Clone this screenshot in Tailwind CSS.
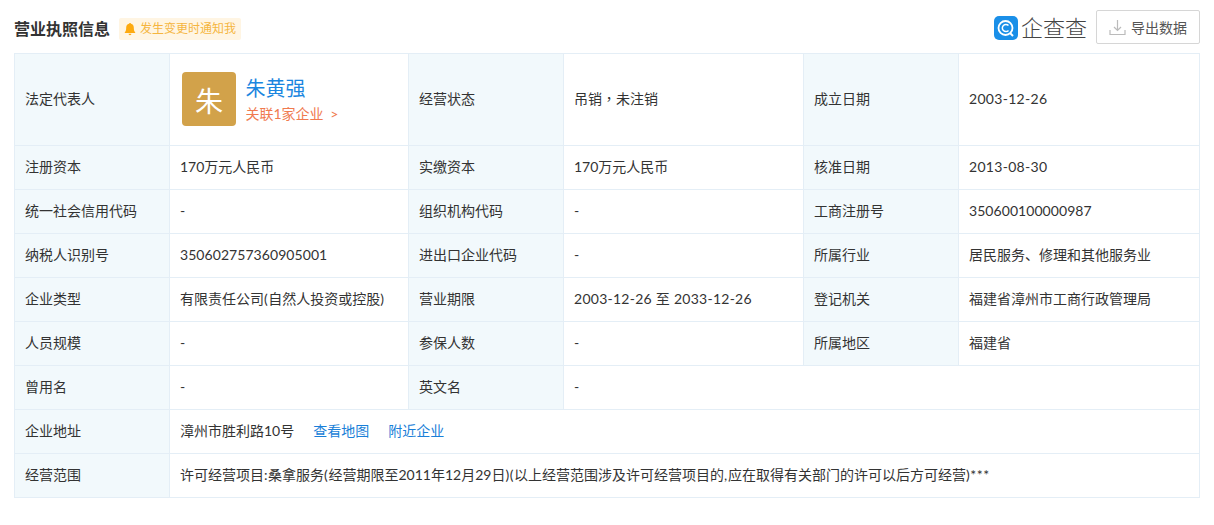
<!DOCTYPE html>
<html lang="en">
<head>
    <meta charset="UTF-8">
    <meta name="viewport" content="width=device-width, initial-scale=1.0">
    <title>营业执照信息</title>
    <script src="https://cdn.jsdelivr.net/npm/@tailwindcss/browser@4"></script>
</head>
<body class="bg-white font-['Lato','Noto_Sans_CJK_SC',sans-serif] text-[14px] text-[#333]">
    <div class="pl-[14px] pr-[14px] pt-[10px]">
        <header class="flex items-center justify-between h-[34px] mb-[9px]">
            <div class="flex items-center mt-[4px]">
                <h3 class="text-[16px] font-bold text-[#333]">营业执照信息</h3>
                <span class="ml-[9px] h-[22px] pl-[4px] pr-[5px] flex items-center bg-[#fff5e3] text-[12px] text-[#f5b53f] rounded-[2px]">
                    <svg class="w-[14px] h-[14px] mr-[3px]" viewBox="0 0 14 14"><path fill="#fdaa10" d="M7 1c.6 0 1 .4 1 .8 1.8.4 2.800 1.800 2.800 3.700 0 2.500.4 3.800 1.400 4.700v.8H1.800v-.8c1-.9 1.400-2.200 1.400-4.700C3.200 3.600 4.200 2.200 6 1.800 6 1.400 6.400 1 7 1zM5.600 11.800h2.800c0 .8-.6 1.400-1.400 1.400s-1.400-.6-1.400-1.400z"/></svg>
                    发生变更时通知我
                </span>
            </div>
            <div class="flex items-center">
                <svg class="w-[24px] h-[24px] mt-[2px]" viewBox="0 0 24 24">
                    <rect width="24" height="24" rx="5" fill="#1a8fe8"/>
                    <circle cx="11.500" cy="12" r="7" fill="none" stroke="#fff" stroke-width="1.800"/>
                    <path d="M14.500 9.500a3.600 3.600 0 1 0 0 5" fill="none" stroke="#fff" stroke-width="1.500"/>
                    <path d="M16 17l3 3" stroke="#fff" stroke-width="2"/>
                </svg>
                <span class="ml-[3px] mt-[2px] text-[22px] leading-none text-[#444] font-light">企查查</span>
                <button class="ml-[9px] w-[104px] h-[34px] flex items-center justify-center border border-[#d6d6d6] rounded-[2px] text-[14px] text-[#555] bg-white">
                    <svg class="w-[17px] h-[17px] mr-[5px]" viewBox="0 0 17 17" fill="none" stroke="#bbb" stroke-width="1.200">
                        <path d="M8.500 1v10M5 8l3.500 3.500L12 8M1 11v4.500h15V11"/>
                    </svg>
                    导出数据
                </button>
            </div>
        </header>

        <table class="w-[1186px] table-fixed border-collapse border border-[#e4eef6] text-[14px] leading-[20px]">
            <colgroup>
                <col class="w-[155px]"><col class="w-[239px]"><col class="w-[155px]"><col class="w-[240px]"><col class="w-[155px]"><col>
            </colgroup>
            <tbody>
                <tr class="h-[92px]">
                    <td class="bg-[#f2f9fc] border border-[#e4eef6] px-[10px] pb-[2px]">法定代表人</td>
                    <td class="border border-[#e4eef6] px-[10px] pb-[2px]">
                        <div class="flex items-center pl-[2px]">
                            <div class="w-[54px] h-[54px] pt-[4px] rounded-[4px] bg-[#d2a24a] text-white text-[28px] flex items-center justify-center">朱</div>
                            <div class="ml-[9.5px]">
                                <div class="text-[20px] leading-[28px] text-[#1a86e0]">朱黄强</div>
                                <div class="mt-[3px] text-[14px] leading-[18px] text-[#f07a4f]">关联1家企业 <span class="ml-[3px]">&gt;</span></div>
                            </div>
                        </div>
                    </td>
                    <td class="bg-[#f2f9fc] border border-[#e4eef6] px-[10px] pb-[2px]">经营状态</td>
                    <td class="border border-[#e4eef6] px-[10px] pb-[2px]">吊销<span lang="zh-Hant" class="font-['Noto_Sans_CJK_TC',sans-serif]">，</span>未注销</td>
                    <td class="bg-[#f2f9fc] border border-[#e4eef6] px-[10px] pb-[2px]">成立日期</td>
                    <td class="border border-[#e4eef6] px-[10px] pb-[2px] tracking-[0.3px]">2003-12-26</td>
                </tr>
                <tr class="h-[44px]">
                    <td class="bg-[#f2f9fc] border border-[#e4eef6] px-[10px] pb-[2px]">注册资本</td>
                    <td class="border border-[#e4eef6] px-[10px] pb-[2px]">170万元人民币</td>
                    <td class="bg-[#f2f9fc] border border-[#e4eef6] px-[10px] pb-[2px]">实缴资本</td>
                    <td class="border border-[#e4eef6] px-[10px] pb-[2px]">170万元人民币</td>
                    <td class="bg-[#f2f9fc] border border-[#e4eef6] px-[10px] pb-[2px]">核准日期</td>
                    <td class="border border-[#e4eef6] px-[10px] pb-[2px] tracking-[0.3px]">2013-08-30</td>
                </tr>
                <tr class="h-[44px]">
                    <td class="bg-[#f2f9fc] border border-[#e4eef6] px-[10px] pb-[2px]">统一社会信用代码</td>
                    <td class="border border-[#e4eef6] px-[10px] pb-[2px]">-</td>
                    <td class="bg-[#f2f9fc] border border-[#e4eef6] px-[10px] pb-[2px]">组织机构代码</td>
                    <td class="border border-[#e4eef6] px-[10px] pb-[2px]">-</td>
                    <td class="bg-[#f2f9fc] border border-[#e4eef6] px-[10px] pb-[2px]">工商注册号</td>
                    <td class="border border-[#e4eef6] px-[10px] pb-[2px] tracking-[0.06px]">350600100000987</td>
                </tr>
                <tr class="h-[44px]">
                    <td class="bg-[#f2f9fc] border border-[#e4eef6] px-[10px] pb-[2px]">纳税人识别号</td>
                    <td class="border border-[#e4eef6] px-[10px] pb-[2px] tracking-[0.06px]">350602757360905001</td>
                    <td class="bg-[#f2f9fc] border border-[#e4eef6] px-[10px] pb-[2px]">进出口企业代码</td>
                    <td class="border border-[#e4eef6] px-[10px] pb-[2px]">-</td>
                    <td class="bg-[#f2f9fc] border border-[#e4eef6] px-[10px] pb-[2px]">所属行业</td>
                    <td class="border border-[#e4eef6] px-[10px] pb-[2px]">居民服务、修理和其他服务业</td>
                </tr>
                <tr class="h-[44px]">
                    <td class="bg-[#f2f9fc] border border-[#e4eef6] px-[10px] pb-[2px]">企业类型</td>
                    <td class="border border-[#e4eef6] px-[10px] pb-[2px]">有限责任公司<span class="tracking-[0.5px]">(</span>自然人投资或控股<span class="tracking-[0.5px]">)</span></td>
                    <td class="bg-[#f2f9fc] border border-[#e4eef6] px-[10px] pb-[2px]">营业期限</td>
                    <td class="border border-[#e4eef6] px-[10px] pb-[2px] tracking-[0.26px]">2003-12-26 至 2033-12-26</td>
                    <td class="bg-[#f2f9fc] border border-[#e4eef6] px-[10px] pb-[2px]">登记机关</td>
                    <td class="border border-[#e4eef6] px-[10px] pb-[2px]">福建省漳州市工商行政管理局</td>
                </tr>
                <tr class="h-[44px]">
                    <td class="bg-[#f2f9fc] border border-[#e4eef6] px-[10px] pb-[2px]">人员规模</td>
                    <td class="border border-[#e4eef6] px-[10px] pb-[2px]">-</td>
                    <td class="bg-[#f2f9fc] border border-[#e4eef6] px-[10px] pb-[2px]">参保人数</td>
                    <td class="border border-[#e4eef6] px-[10px] pb-[2px]">-</td>
                    <td class="bg-[#f2f9fc] border border-[#e4eef6] px-[10px] pb-[2px]">所属地区</td>
                    <td class="border border-[#e4eef6] px-[10px] pb-[2px]">福建省</td>
                </tr>
                <tr class="h-[44px]">
                    <td class="bg-[#f2f9fc] border border-[#e4eef6] px-[10px] pb-[2px]">曾用名</td>
                    <td class="border border-[#e4eef6] px-[10px] pb-[2px]">-</td>
                    <td class="bg-[#f2f9fc] border border-[#e4eef6] px-[10px] pb-[2px]">英文名</td>
                    <td colspan="3" class="border border-[#e4eef6] px-[10px] pb-[2px]">-</td>
                </tr>
                <tr class="h-[44px]">
                    <td class="bg-[#f2f9fc] border border-[#e4eef6] px-[10px] pb-[2px]">企业地址</td>
                    <td colspan="5" class="border border-[#e4eef6] px-[10px] pb-[2px]">漳州市胜利路10号<a class="ml-[19px] text-[#1a7fd8]" href="#">查看地图</a><a class="ml-[19px] text-[#1a7fd8]" href="#">附近企业</a></td>
                </tr>
                <tr class="h-[44px]">
                    <td class="bg-[#f2f9fc] border border-[#e4eef6] px-[10px] pb-[2px]">经营范围</td>
                    <td colspan="5" class="border border-[#e4eef6] px-[10px] pb-[2px]">许可经营项目<span class="tracking-[0.6px]">:</span>桑拿服务<span class="tracking-[0.6px]">(</span>经营期限至2011年12月29日<span class="tracking-[0.6px]">)(</span>以上经营范围涉及许可经营项目的<span class="tracking-[0.6px]">,</span>应在取得有关部门的许可以后方可经营<span class="tracking-[0.6px]">)***</span></td>
                </tr>
            </tbody>
        </table>
    </div>
</body>
</html>
